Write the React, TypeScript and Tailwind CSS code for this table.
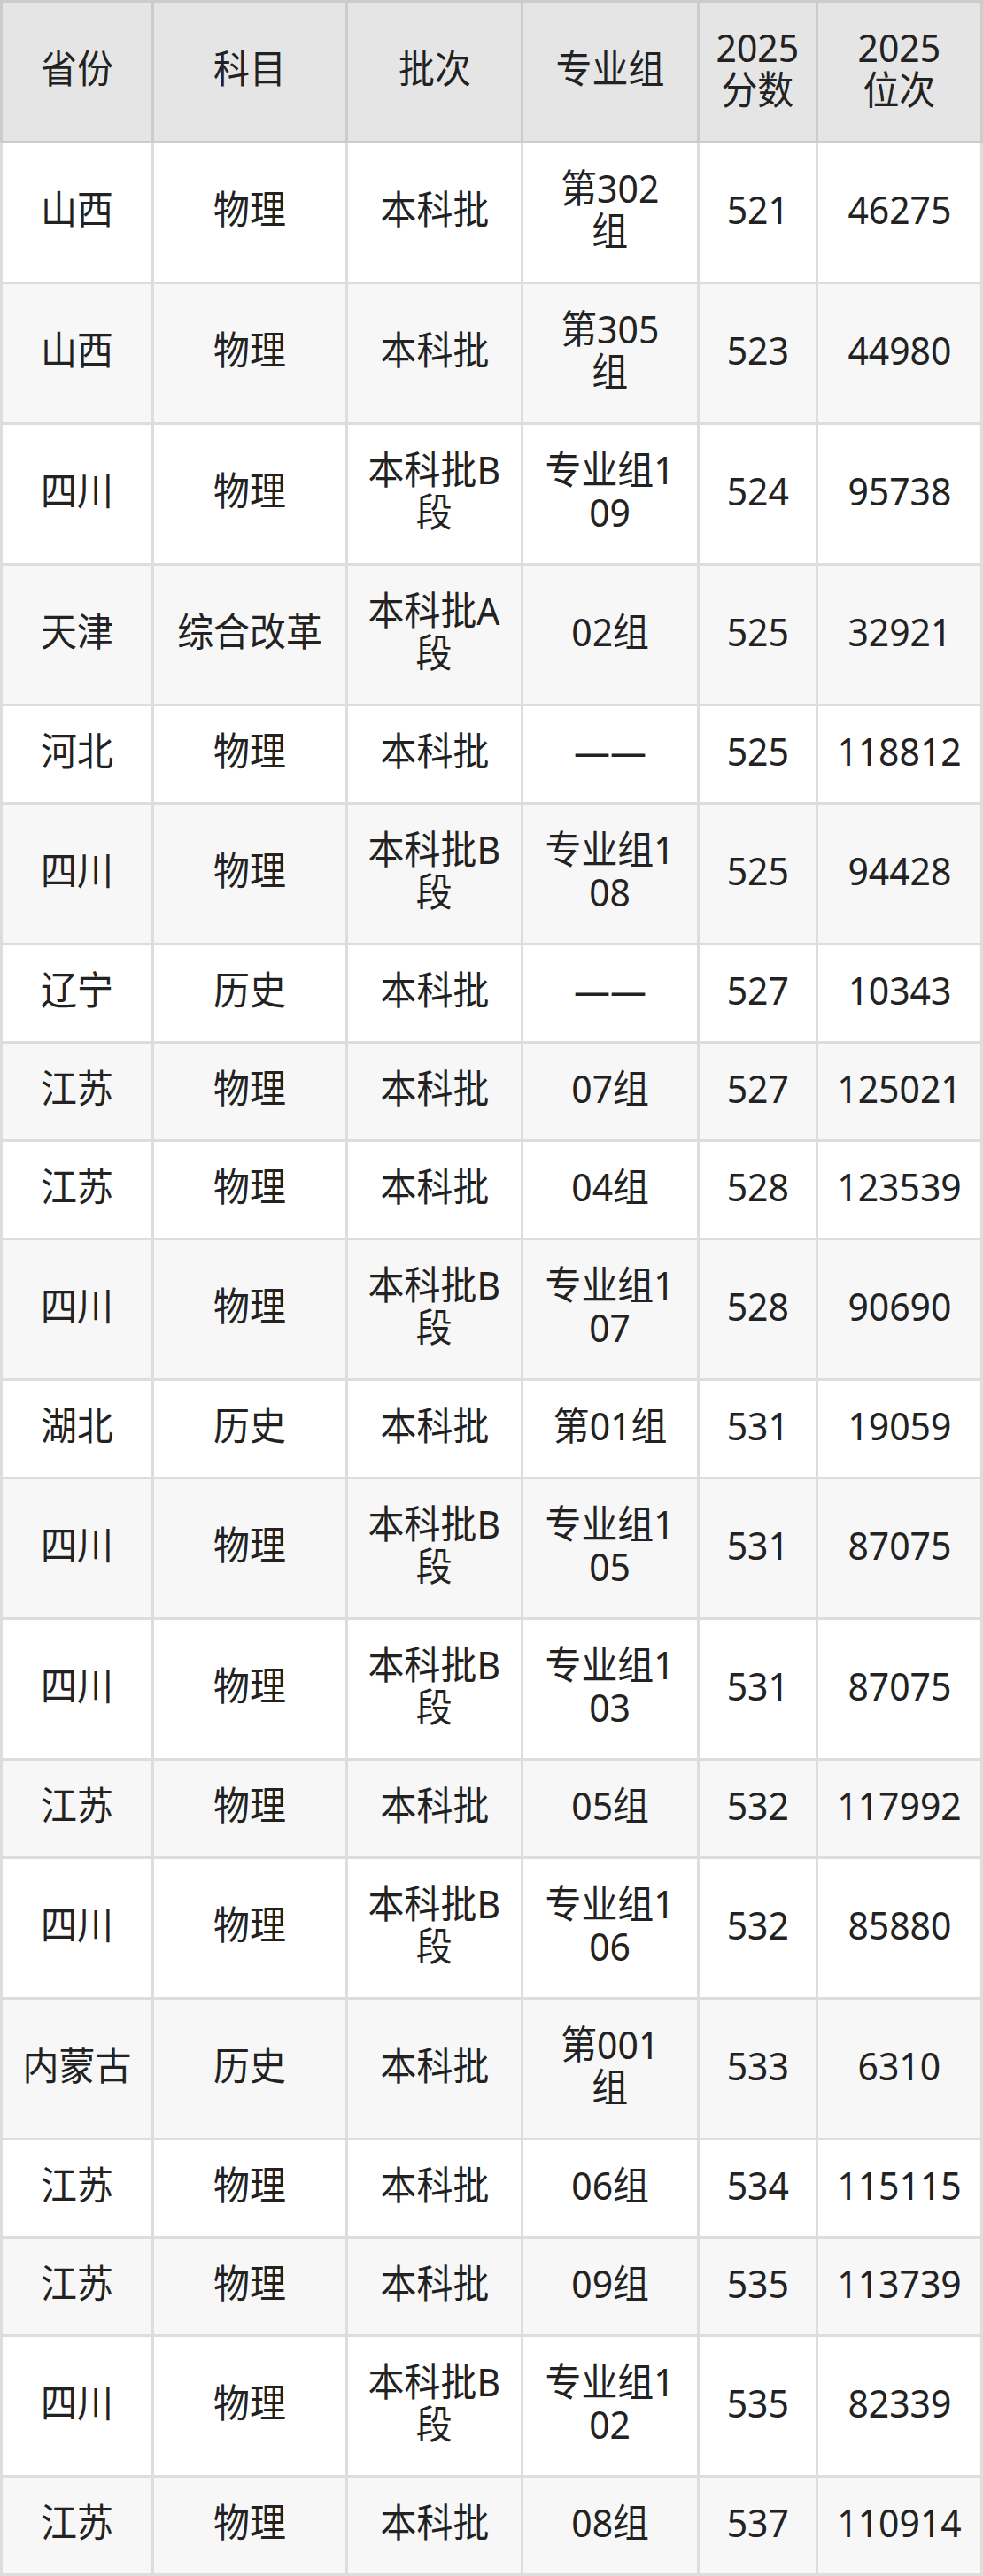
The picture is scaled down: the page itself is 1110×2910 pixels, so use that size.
import React from "react";

type Row = [string, string, string, string, string, string];

const rows: Row[] = [
  ["山西", "物理", "本科批", "第302\n组", "521", "46275"],
  ["山西", "物理", "本科批", "第305\n组", "523", "44980"],
  ["四川", "物理", "本科批B\n段", "专业组1\n09", "524", "95738"],
  ["天津", "综合改革", "本科批A\n段", "02组", "525", "32921"],
  ["河北", "物理", "本科批", "——", "525", "118812"],
  ["四川", "物理", "本科批B\n段", "专业组1\n08", "525", "94428"],
  ["辽宁", "历史", "本科批", "——", "527", "10343"],
  ["江苏", "物理", "本科批", "07组", "527", "125021"],
  ["江苏", "物理", "本科批", "04组", "528", "123539"],
  ["四川", "物理", "本科批B\n段", "专业组1\n07", "528", "90690"],
  ["湖北", "历史", "本科批", "第01组", "531", "19059"],
  ["四川", "物理", "本科批B\n段", "专业组1\n05", "531", "87075"],
  ["四川", "物理", "本科批B\n段", "专业组1\n03", "531", "87075"],
  ["江苏", "物理", "本科批", "05组", "532", "117992"],
  ["四川", "物理", "本科批B\n段", "专业组1\n06", "532", "85880"],
  ["内蒙古", "历史", "本科批", "第001\n组", "533", "6310"],
  ["江苏", "物理", "本科批", "06组", "534", "115115"],
  ["江苏", "物理", "本科批", "09组", "535", "113739"],
  ["四川", "物理", "本科批B\n段", "专业组1\n02", "535", "82339"],
  ["江苏", "物理", "本科批", "08组", "537", "110914"],
];

const headers = ["省份", "科目", "批次", "专业组", "2025\n分数", "2025\n位次"];

// text in the picture is slightly narrower than it is tall
const Cell = ({ text }: { text: string }) => (
  <span className="inline-block scale-x-[0.93] whitespace-pre-line">{text}</span>
);

const App = () => {
  return (
    <div className="w-[1110px] bg-white">
      <table
        className="w-[1110px] table-fixed border-collapse text-center text-[44px] leading-[48px] text-[#222222]"
        style={{ fontFamily: '"Noto Sans", "Noto Sans CJK SC", sans-serif' }}
      >
        <colgroup>
          <col className="w-[171px]" />
          <col className="w-[219px]" />
          <col className="w-[198px]" />
          <col className="w-[199px]" />
          <col className="w-[134px]" />
          <col className="w-[186px]" />
        </colgroup>
        <thead>
          <tr className="bg-[#e5e5e5]">
            {headers.map((h) => (
              <th
                key={h}
                className="border-[3px] border-[#cccccc] px-0 pt-[26px] pb-[34px] align-middle font-normal"
              >
                <Cell text={h} />
              </th>
            ))}
          </tr>
        </thead>
        <tbody>
          {rows.map((r, i) => (
            <tr key={i} className={i % 2 === 0 ? "bg-white" : "bg-[#f7f7f7]"}>
              {r.map((c, j) => (
                <td
                  key={j}
                  className="border-[3px] border-[#dddddd] px-0 pt-[26px] pb-[34px] align-middle"
                >
                  <Cell text={c} />
                </td>
              ))}
            </tr>
          ))}
        </tbody>
      </table>
    </div>
  );
};

export default App;
